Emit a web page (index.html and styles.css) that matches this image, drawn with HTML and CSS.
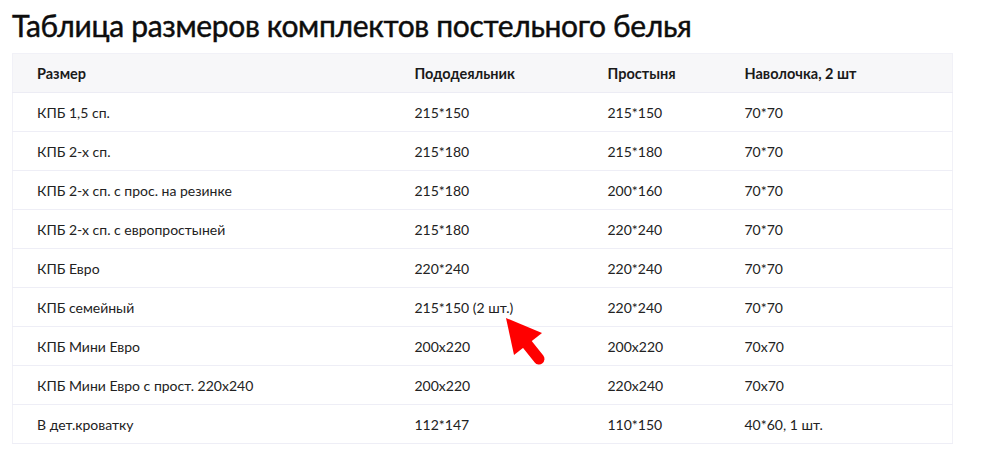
FILE: index.html
```html
<!DOCTYPE html>
<html lang="ru">
<head>
<meta charset="utf-8">
<link rel="stylesheet" href="styles.css">
</head>
<body>
<div class="page">
  <h1 class="title">Таблица размеров комплектов постельного белья</h1>
  <div class="table-wrap">
    <table class="sizes">
      <colgroup>
        <col class="c1"><col class="c2"><col class="c3"><col class="c4">
      </colgroup>
      <thead>
        <tr><th>Размер</th><th>Пододеяльник</th><th>Простыня</th><th>Наволочка, 2 шт</th></tr>
      </thead>
      <tbody>
        <tr><td>КПБ 1,5 сп.</td><td>215*150</td><td>215*150</td><td>70*70</td></tr>
        <tr><td>КПБ 2-х сп.</td><td>215*180</td><td>215*180</td><td>70*70</td></tr>
        <tr><td>КПБ 2-х сп. с прос. на резинке</td><td>215*180</td><td>200*160</td><td>70*70</td></tr>
        <tr><td>КПБ 2-х сп. с европростыней</td><td>215*180</td><td>220*240</td><td>70*70</td></tr>
        <tr><td>КПБ Евро</td><td>220*240</td><td>220*240</td><td>70*70</td></tr>
        <tr><td>КПБ семейный</td><td class="marked">215*150 (2 шт.)<svg class="arrow" width="44" height="54" viewBox="0 0 44 54"><polygon points="3,4 11,41 39,19" fill="#ff0000"/><line x1="24" y1="30" x2="36" y2="45" stroke="#ff0000" stroke-width="11" stroke-linecap="round"/></svg></td><td>220*240</td><td>70*70</td></tr>
        <tr><td>КПБ Мини Евро</td><td>200x220</td><td>200x220</td><td>70x70</td></tr>
        <tr><td>КПБ Мини Евро с прост. 220x240</td><td>200x220</td><td>220x240</td><td>70x70</td></tr>
        <tr><td>В дет.кроватку</td><td>112*147</td><td>110*150</td><td>40*60, 1 шт.</td></tr>
      </tbody>
    </table>
  </div>
</div>
</body>
</html>
```
FILE: styles.css
```css
html, body {
  margin: 0;
  padding: 0;
  background: #ffffff;
}
.page {
  padding: 3px 12px 0 12px;
  font-family: "Lato", "Noto Sans", sans-serif;
  color: #1c1c1c;
}
.title {
  margin: 0;
  font-size: 30px;
  font-weight: 400;
  line-height: 44px;
  height: 50px;
  color: #0d0d0d;
  letter-spacing: -0.33px;
  -webkit-text-stroke: 0.45px #0d0d0d;
}
.table-wrap {
  width: 940px;
}
.sizes {
  width: 940px;
  border-collapse: collapse;
  table-layout: fixed;
  border: 1px solid #f1f1f7;
  font-size: 14px;
}
.c1 { width: 378px; }
.c2 { width: 193px; }
.c3 { width: 137px; }
.c4 { width: 232px; }
.sizes th,
.sizes td {
  height: 38px;
  padding: 0 24px;
  text-align: left;
  white-space: nowrap;
  border-bottom: 1px solid #eeeef6;
}
.sizes th {
  background: #f7f7f9;
  font-size: 14.5px;
  font-weight: 700;
  color: #1a1a1a;
  border-bottom: 1px solid #ececf4;
}
.sizes td {
  font-weight: 400;
  color: #222222;
}
.marked {
  position: relative;
}
.arrow {
  position: absolute;
  left: 112px;
  top: 26px;
}
```
